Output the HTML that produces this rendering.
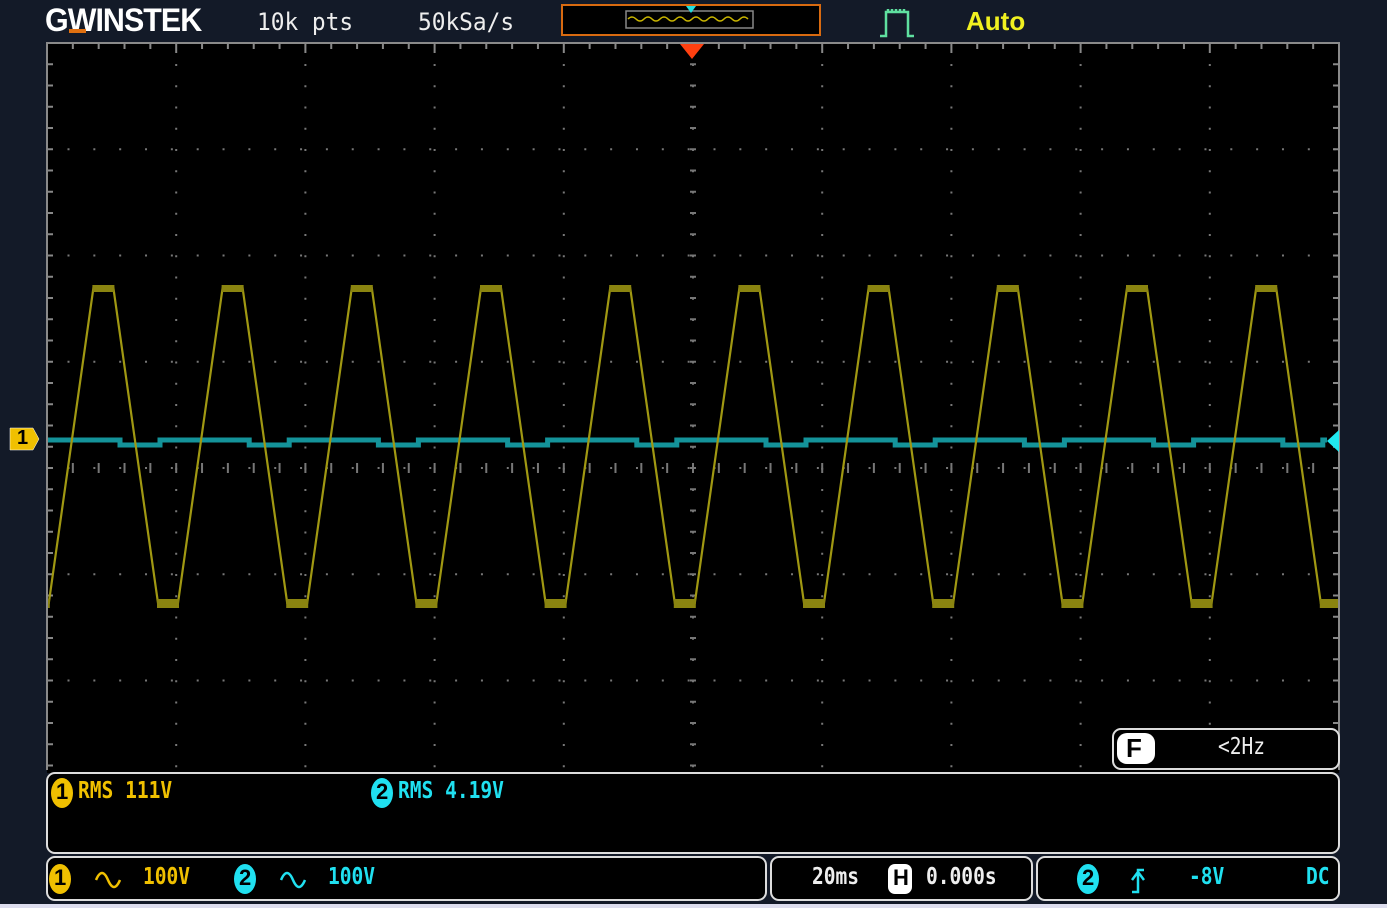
<!DOCTYPE html>
<html><head><meta charset="utf-8"><style>
body{margin:0;width:1387px;height:908px;background:#131a28;overflow:hidden;position:relative;font-family:"DejaVu Sans Mono","Liberation Mono",monospace}
.t{position:absolute;white-space:nowrap}
</style></head><body>
<svg width="1387" height="908" style="position:absolute;left:0;top:0" id="s">
<defs><clipPath id="cp"><rect x="48" y="43" width="1290" height="730"/></clipPath></defs>
<rect x="0" y="0" width="1387" height="908" fill="#131a28"/>
<rect x="47" y="43" width="1292" height="730" fill="#000"/>
<g id="grid"></g>
<path d="M47 770 V43 H1339 V770" fill="none" stroke="#8a8a8a" stroke-width="2"/>
<g clip-path="url(#cp)">
<path id="cy" fill="none" stroke="#14939a" stroke-width="5"/>
<path id="ye" fill="none" stroke="#a09812" stroke-width="2.2"/>
<g id="flats" fill="#8a8410"></g>
</g>
<!-- top bar -->
<rect x="562" y="5" width="258" height="30" fill="#000" stroke="#d86a10" stroke-width="2"/>
<rect x="626" y="11" width="127" height="17" fill="none" stroke="#888" stroke-width="1.5"/>
<path d="M628 19 q4 -4 8 0 t8 0 t8 0 t8 0 t8 0 t8 0 t8 0 t8 0 t8 0 t8 0 t8 0 t8 0 t8 0 t8 0 t8 0" fill="none" stroke="#c8b400" stroke-width="1.5"/>
<path d="M686 6 h10 l-5 7 z" fill="#20e0e0"/>
<path d="M680 44 h24 l-12 15 z" fill="#ff4010"/>
<path d="M880 36 h6 v-24 h22 v24 h6 M888 12 v-3 m4 3 v-3 m4 3 v-3 m4 3 v-3 m4 3 v-3" fill="none" stroke="#5fe0a0" stroke-width="2.5"/>
<!-- ch1 marker -->
<path d="M10 428 h23 l6 11 l-6 11 h-23 z" fill="#f0c000" stroke="#fff" stroke-width="0.5"/>
<path d="M1339 430 l-12 11 l12 11 z" fill="#20e8f0"/>
<!-- boxes -->
<rect x="47" y="773" width="1292" height="80" rx="8" fill="#000" stroke="#ddd" stroke-width="2"/>
<rect x="47" y="857" width="719" height="43" rx="8" fill="#000" stroke="#ddd" stroke-width="2"/>
<rect x="771" y="857" width="261" height="43" rx="8" fill="#000" stroke="#ddd" stroke-width="2"/>
<rect x="1037" y="857" width="302" height="43" rx="8" fill="#000" stroke="#ddd" stroke-width="2"/>
<rect x="1113" y="729" width="226" height="40" rx="8" fill="#000" stroke="#ddd" stroke-width="2"/>
<rect x="1117" y="733" width="38" height="31" rx="10" fill="#fff"/>
<rect x="888" y="864" width="24" height="30" rx="7" fill="#fff"/>
<ellipse cx="62" cy="793" rx="11" ry="15" fill="#f0c000"/>
<ellipse cx="382" cy="793" rx="11" ry="15" fill="#20e0f0"/>
<ellipse cx="60" cy="879" rx="11" ry="15" fill="#f0c000"/>
<ellipse cx="245" cy="879" rx="11" ry="15" fill="#20e0f0"/>
<ellipse cx="1088" cy="879" rx="11" ry="15" fill="#20e0f0"/>
<path d="M96 880 q6 -14 12 0 t12 0" fill="none" stroke="#f0c000" stroke-width="2.5"/>
<path d="M281 880 q6 -14 12 0 t12 0" fill="none" stroke="#20e0f0" stroke-width="2.5"/>
<path d="M1132 892 h6 v-22 h6 M1132 880 l6 -8 l6 8" fill="none" stroke="#20e0f0" stroke-width="2.5"/>
<rect x="0" y="904" width="1387" height="4" fill="#dde"/>
</svg>
<div class="t" style="left:45px;top:2px;font:bold 32px 'Liberation Sans',sans-serif;color:#fff;letter-spacing:-1px;transform:scaleX(0.95);transform-origin:left">GWINSTEK</div>
<div style="position:absolute;left:69px;top:29px;width:17px;height:4px;background:#e07010"></div>
<div class="t" style="left:257px;top:8px;font-size:24px;color:#eee;transform:scaleX(.95);transform-origin:left">10k pts</div>
<div class="t" style="left:418px;top:8px;font-size:24px;color:#eee;transform:scaleX(.95);transform-origin:left">50kSa/s</div>
<div class="t" style="left:966px;top:6px;font:bold 26px 'Liberation Sans',sans-serif;color:#f0f020">Auto</div>
<div class="t" style="left:17px;top:427px;font:bold 20px 'Liberation Sans',sans-serif;color:#000">1</div>
<div class="t" style="left:56px;top:779px;font:bold 22px 'Liberation Sans',sans-serif;color:#000">1</div>
<div class="t" style="left:376px;top:779px;font:bold 22px 'Liberation Sans',sans-serif;color:#000">2</div>
<div class="t" style="left:54px;top:865px;font:bold 22px 'Liberation Sans',sans-serif;color:#000">1</div>
<div class="t" style="left:239px;top:865px;font:bold 22px 'Liberation Sans',sans-serif;color:#000">2</div>
<div class="t" style="left:1082px;top:865px;font:bold 22px 'Liberation Sans',sans-serif;color:#000">2</div>
<div class="t" style="left:1126px;top:733px;font:bold 26px 'Liberation Sans',sans-serif;color:#000">F</div>
<div class="t" style="left:893px;top:865px;font:bold 22px 'Liberation Sans',sans-serif;color:#000">H</div>
<div class="t" style="left:78px;top:778px;font-size:23px;font-weight:bold;color:#f0c000;transform:scaleX(.85);transform-origin:left">RMS 111V</div>
<div class="t" style="left:398px;top:778px;font-size:23px;font-weight:bold;color:#20e0f0;transform:scaleX(.85);transform-origin:left">RMS 4.19V</div>
<div class="t" style="left:143px;top:864px;font-size:23px;font-weight:bold;color:#f0c000;transform:scaleX(.85);transform-origin:left">100V</div>
<div class="t" style="left:328px;top:864px;font-size:23px;font-weight:bold;color:#20e0f0;transform:scaleX(.85);transform-origin:left">100V</div>
<div class="t" style="left:812px;top:864px;font-size:23px;font-weight:bold;color:#eee;transform:scaleX(.85);transform-origin:left">20ms</div>
<div class="t" style="left:926px;top:864px;font-size:23px;font-weight:bold;color:#eee;transform:scaleX(.85);transform-origin:left">0.000s</div>
<div class="t" style="left:1189px;top:864px;font-size:23px;font-weight:bold;color:#20e0f0;transform:scaleX(.85);transform-origin:left">-8V</div>
<div class="t" style="left:1306px;top:864px;font-size:23px;font-weight:bold;color:#20e0f0;transform:scaleX(.85);transform-origin:left">DC</div>
<div class="t" style="left:1218px;top:734px;font-size:23px;color:#eee;transform:scaleX(.85);transform-origin:left">&lt;2Hz</div>
<script>
var g=document.getElementById('grid'),h='';
function r(x,y,w,hh,c){h+='<rect x="'+x+'" y="'+y+'" width="'+w+'" height="'+hh+'" fill="'+(c||'#888')+'"/>';}
for(var i=0;i<=10;i++){var x=47+129.2*i;for(var y=64;y<770;y+=21.25)r(x-1,y,2,2,'#777');}
for(var j=1;j<8;j++){var y=43+106.25*j;if(y>770)break;for(var x=68.5;x<1339;x+=25.84)r(x-1,y-1,2,2,'#777');}
for(var x=47;x<=1339;x+=25.84){r(x-1,43,2,(Math.round((x-47)/25.84)%5==0)?10:6);r(x-1,463,2,10,'#777');}
for(var y=43;y<770;y+=21.25){r(1333,y-1,6,2);r(47,y-1,6,2);r(690,y-1,6,2,'#777');}
g.innerHTML=h;
var d='',f='',P=129.2,T0=168;
for(var k=-1;k<11;k++){var tr=T0+k*P,pk=tr-P/2;
 var pts=[[pk-10,288],[pk+10,288],[tr-10,603],[tr+10,603]];
 pts.forEach(function(p){d+=(d?'L':'M')+p[0].toFixed(1)+' '+p[1];});
 f+='<rect x="'+(pk-11)+'" y="285" width="22" height="7"/><rect x="'+(tr-11)+'" y="599" width="22" height="9"/>';
}
document.getElementById('ye').setAttribute('d',d);
document.getElementById('flats').innerHTML=f;
var c='M47 440';
for(var k=0;k<11;k++){var a=120+k*P,b=160+k*P;if(a>1327)break;c+='L'+a+' 440 V445 L'+Math.min(b,1327)+' 445 V440';}
c+='L1327 440';
document.getElementById('cy').setAttribute('d',c);
</script>
</body></html>
